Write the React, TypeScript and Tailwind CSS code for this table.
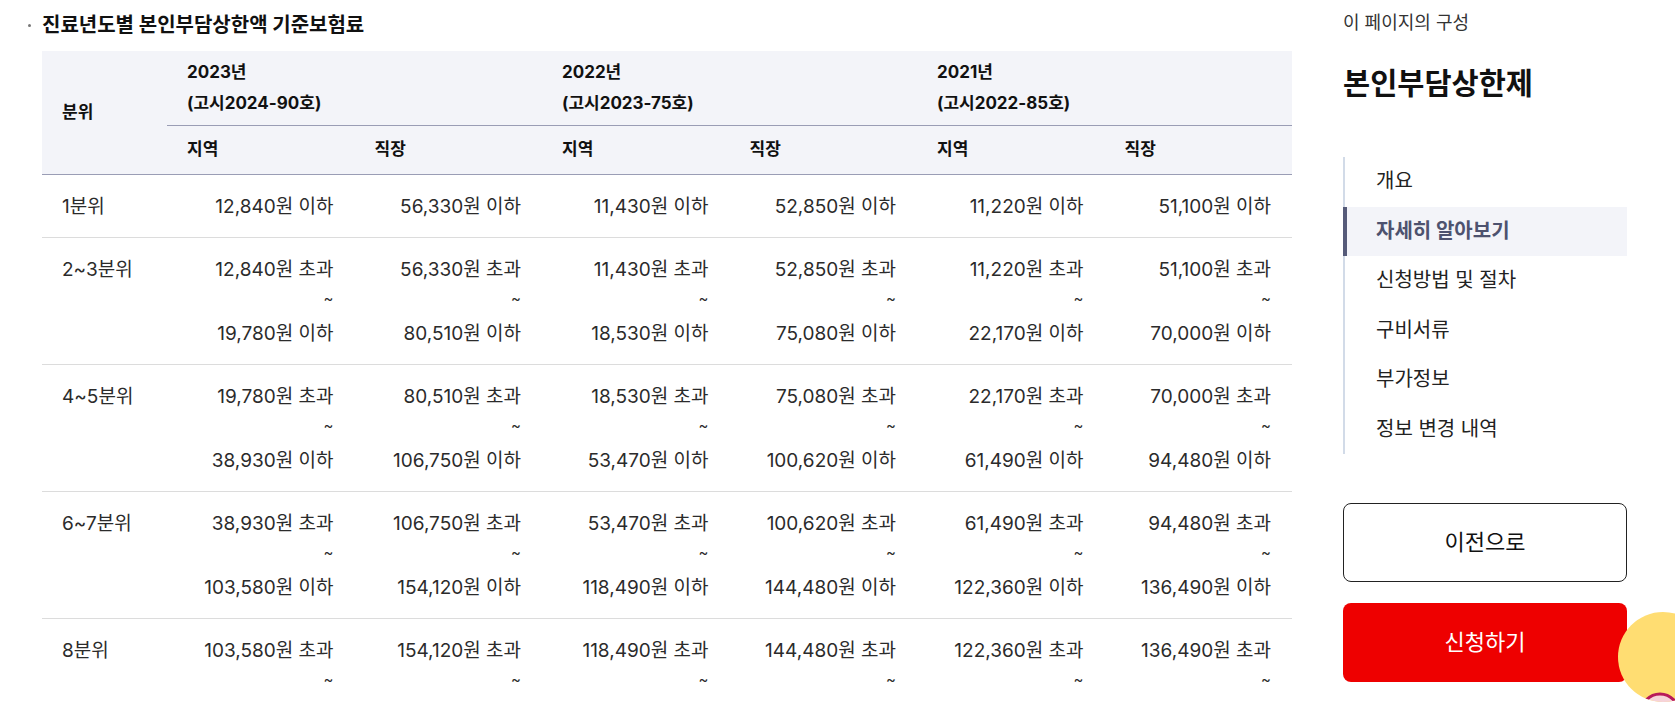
import React from "react";

type Cell = string[];

const rows: { label: string; cells: Cell[] }[] = [
  {
    label: "1분위",
    cells: [["12,840원 이하"], ["56,330원 이하"], ["11,430원 이하"], ["52,850원 이하"], ["11,220원 이하"], ["51,100원 이하"]],
  },
  {
    label: "2~3분위",
    cells: [
      ["12,840원 초과", "~", "19,780원 이하"],
      ["56,330원 초과", "~", "80,510원 이하"],
      ["11,430원 초과", "~", "18,530원 이하"],
      ["52,850원 초과", "~", "75,080원 이하"],
      ["11,220원 초과", "~", "22,170원 이하"],
      ["51,100원 초과", "~", "70,000원 이하"],
    ],
  },
  {
    label: "4~5분위",
    cells: [
      ["19,780원 초과", "~", "38,930원 이하"],
      ["80,510원 초과", "~", "106,750원 이하"],
      ["18,530원 초과", "~", "53,470원 이하"],
      ["75,080원 초과", "~", "100,620원 이하"],
      ["22,170원 초과", "~", "61,490원 이하"],
      ["70,000원 초과", "~", "94,480원 이하"],
    ],
  },
  {
    label: "6~7분위",
    cells: [
      ["38,930원 초과", "~", "103,580원 이하"],
      ["106,750원 초과", "~", "154,120원 이하"],
      ["53,470원 초과", "~", "118,490원 이하"],
      ["100,620원 초과", "~", "144,480원 이하"],
      ["61,490원 초과", "~", "122,360원 이하"],
      ["94,480원 초과", "~", "136,490원 이하"],
    ],
  },
  {
    label: "8분위",
    cells: [
      ["103,580원 초과", "~", "154,780원 이하"],
      ["154,120원 초과", "~", "224,210원 이하"],
      ["118,490원 초과", "~", "165,480원 이하"],
      ["144,480원 초과", "~", "207,100원 이하"],
      ["122,360원 초과", "~", "171,910원 이하"],
      ["136,490원 초과", "~", "195,120원 이하"],
    ],
  },
];

const years = [
  ["2023년", "(고시2024-90호)"],
  ["2022년", "(고시2023-75호)"],
  ["2021년", "(고시2022-85호)"],
];

const navItems = ["개요", "자세히 알아보기", "신청방법 및 절차", "구비서류", "부가정보", "정보 변경 내역"];

export default function App() {
  return (
    <div
      className="relative flex h-[703px] w-full overflow-hidden bg-white"
      style={{ fontFamily: 'Inter, "Noto Sans CJK KR", "Noto Sans", sans-serif' }}
    >
      {/* Left content */}
      <div className="w-[1292px] shrink-0 pl-[28px] pt-[12px]">
        <div className="flex h-[26px] items-center">
          <div className="h-[3px] w-[3px] rounded-full bg-[#777]" />
          <h3 className="ml-[11px] text-[20px] font-bold leading-[26px] text-[#111]">
            진료년도별 본인부담상한액 기준보험료
          </h3>
        </div>
        <table className="ml-[14px] mt-[13px] w-[1250px] table-fixed border-collapse">
          <colgroup>
            <col className="w-[125px]" />
            <col className="w-[187.5px]" />
            <col className="w-[187.5px]" />
            <col className="w-[187.5px]" />
            <col className="w-[187.5px]" />
            <col className="w-[187.5px]" />
            <col className="w-[187.5px]" />
          </colgroup>
          <thead className="bg-[#f3f4f9] text-[17px] font-bold text-[#111]">
            <tr className="h-[74px]">
              <th
                rowSpan={2}
                className="border-b border-[#9a9db5] px-5 text-left align-middle font-bold"
              >
                분위
              </th>
              {years.map((y) => (
                <th
                  key={y[0]}
                  colSpan={2}
                  className="border-b border-[#9a9db5] px-5 text-left align-middle font-bold leading-[31px]"
                >
                  <div>{y[0]}</div>
                  <div>{y[1]}</div>
                </th>
              ))}
            </tr>
            <tr className="h-[49px]">
              {[0, 1, 2].map((i) => (
                <React.Fragment key={i}>
                  <th className="border-b border-[#9a9db5] px-5 text-left align-middle font-bold">지역</th>
                  <th className="border-b border-[#9a9db5] px-5 text-left align-middle font-bold">직장</th>
                </React.Fragment>
              ))}
            </tr>
          </thead>
          <tbody className="text-[19px] leading-[32px] text-[#2b2b2b]">
            {rows.map((r) => (
              <tr key={r.label} className="border-b border-[#dcdcdc]">
                <td className="px-5 pb-[14px] pt-[16px] text-left align-top">{r.label}</td>
                {r.cells.map((c, i) => (
                  <td key={i} className="pb-[14px] pl-5 pr-[21px] pt-[16px] text-right align-top">
                    {c.map((line, j) =>
                      line === "~" ? (
                        <div key={j} className="-translate-y-[3px] text-[15px]">
                          ~
                        </div>
                      ) : (
                        <div key={j}>{line}</div>
                      )
                    )}
                  </td>
                ))}
              </tr>
            ))}
          </tbody>
        </table>
      </div>

      {/* Sidebar */}
      <aside className="ml-[51px] w-[284px] shrink-0 pt-[10px]">
        <p className="text-[18px] leading-[26px] text-[#333]">이 페이지의 구성</p>
        <h2 className="mt-[27px] text-[29.5px] font-bold leading-[40px] text-[#111]">본인부담상한제</h2>
        <ul className="mt-[54px] border-l-2 border-[#d2dbe8]">
          {navItems.map((item) =>
            item === "자세히 알아보기" ? (
              <li
                key={item}
                className="-ml-[2px] h-[49.5px] border-l-[4px] border-[#565b79] bg-[#f3f4f9] pl-[29px] text-[20px] font-bold leading-[49.5px] text-[#4d526f]"
              >
                {item}
              </li>
            ) : (
              <li key={item} className="h-[49.5px] pl-[31px] text-[20px] leading-[49.5px] text-[#222]">
                {item}
              </li>
            )
          )}
        </ul>
        <button className="mt-[49px] flex h-[79px] w-full items-center justify-center rounded-[8px] border border-[#222] bg-white text-[22px] text-[#111]">
          이전으로
        </button>
        <button className="mt-[21px] flex h-[79px] w-full items-center justify-center rounded-[8px] bg-[#ee0000] text-[22px] text-white">
          신청하기
        </button>
      </aside>

      {/* Floating chatbot badge */}
      <div className="absolute left-[1618px] top-[612px] h-[90px] w-[90px] overflow-hidden rounded-full bg-[#ffdd72]">
        <svg width="90" height="90" viewBox="0 0 90 90" className="absolute left-0 top-0">
          <circle cx="42" cy="101" r="19" fill="#f6d3d9" stroke="#b8195a" strokeWidth="3" />
        </svg>
      </div>
    </div>
  );
}
